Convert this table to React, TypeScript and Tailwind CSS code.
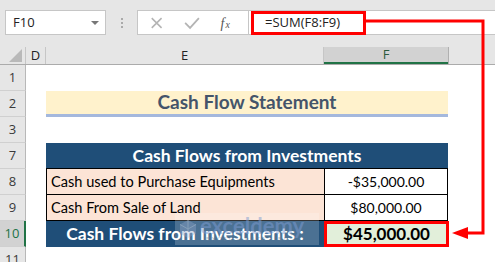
import React from 'react';

const rowHeads = [
  { n: '1' },
  { n: '2' },
  { n: '3' },
  { n: '7' },
  { n: '8' },
  { n: '9' },
  { n: '10', active: true },
  { n: '11' },
];

function RowHead({ n, active }: { n: string; active?: boolean }) {
  return (
    <div
      className={
        'flex h-full w-[26px] shrink-0 items-center justify-center border-b border-[#d0d0d0] text-[13px] ' +
        (active
          ? 'border-r-2 border-r-[#217346] bg-[#d2d2d2] text-[#217346]'
          : 'border-r border-r-[#b8b8b8] bg-[#e6e6e6] text-[#3a3a3a]')
      }
      style={{ fontFamily: '"Open Sans", "DejaVu Sans", sans-serif' }}
    >
      {n}
    </div>
  );
}

export default function App() {
  return (
    <div className="relative h-[262px] w-[495px] overflow-hidden bg-white font-['Lato',sans-serif]">
      {/* Formula bar */}
      <div className="flex h-[47px] items-start bg-[#e6e6e6] pt-[10px]">
        <div className="ml-[5px] flex h-[25px] w-[101px] items-center justify-between border border-[#c6c6c6] bg-white pl-[7px] pr-[6px] font-['Open_Sans',sans-serif] text-[13px] text-[#222]">
          <span>F10</span>
          <span className="h-0 w-0 border-x-[4px] border-t-[4px] border-x-transparent border-t-[#777]" />
        </div>
        <div className="flex h-[25px] w-[31px] flex-col items-center justify-center gap-[2px]">
          <span className="h-[2px] w-[2px] bg-[#aaa]" />
          <span className="h-[2px] w-[2px] bg-[#aaa]" />
          <span className="h-[2px] w-[2px] bg-[#aaa]" />
        </div>
        <div className="flex h-[25px] w-[112px] items-center border border-[#c6c6c6] bg-white">
          <svg width="112" height="23" viewBox="0 0 112 23">
            <path d="M14 7 L24 17 M24 7 L14 17" stroke="#b4b4b4" strokeWidth="1.6" fill="none" />
            <path d="M48 12 L53 17 L62 7" stroke="#b4b4b4" strokeWidth="1.8" fill="none" />
            <text x="84" y="17" fontFamily="'Liberation Serif', serif" fontStyle="italic" fontSize="14" fill="#555">f</text>
            <text x="89" y="17" fontFamily="'Liberation Serif', serif" fontStyle="italic" fontSize="10" fill="#555">x</text>
          </svg>
        </div>
        <div className="flex h-[25px] flex-1 items-center border-y border-[#c6c6c6] bg-white pl-[2px]">
          <div className="flex h-[24px] w-[115px] items-center border-[3px] border-[#ff0000] pl-[11px] font-['Open_Sans',sans-serif] text-[13px] text-[#222]">
            =SUM(F8:F9)
          </div>
        </div>
      </div>

      {/* Column headers */}
      <div
        className="flex h-[18px] border-b border-[#ababab] bg-[#e6e6e6] text-[13px] text-[#222]"
        style={{ fontFamily: '"Open Sans", "DejaVu Sans", sans-serif' }}
      >
        <div className="relative w-[26px] shrink-0 border-r border-[#c6c6c6]">
          <span className="absolute bottom-[2px] right-[3px] h-0 w-0 border-b-[13px] border-l-[13px] border-b-[#b9b9b9] border-l-transparent" />
        </div>
        <div className="flex w-[20px] shrink-0 items-center justify-center border-r border-[#c6c6c6]">D</div>
        <div className="flex w-[278px] shrink-0 items-center justify-center border-r border-[#c6c6c6]">E</div>
        <div className="flex w-[124px] shrink-0 items-center justify-center border-b-2 border-[#217346] bg-[#d2d2d2] text-[#2a5a3c]">
          F
        </div>
        <div className="flex-1 border-l border-[#b0b0b0]" />
      </div>

      {/* Rows */}
      <div className="flex flex-col">
        {rowHeads.map((r) => (
          <div key={r.n} className="flex h-[26px]">
            <RowHead n={r.n} active={r.active} />
            <div className="w-[20px] shrink-0" />
            {r.n === '2' && (
              <div className="flex h-[26px] w-[402px] items-center justify-center border-b-[3px] border-[#a4b8dd] bg-[#fff2cc] text-[19px] font-bold text-[#44546a]">
                Cash Flow Statement
              </div>
            )}
            {r.n === '7' && (
              <div className="flex w-[402px] items-center justify-center border-b border-black bg-[#1f4e78] pt-[1px] text-[17.5px] font-bold text-white">
                Cash Flows from Investments
              </div>
            )}
            {(r.n === '8' || r.n === '9') && (
              <>
                <div className="flex w-[278px] items-center border-b border-l border-black bg-[#fce4d6] pl-[4px] text-[14.6px] text-black">
                  {r.n === '8' ? 'Cash used to Purchase Equipments' : 'Cash From Sale of Land'}
                </div>
                <div className="flex w-[124px] items-center justify-center border-x border-b border-black bg-white text-[14px] text-black">
                  {r.n === '8' ? '-$35,000.00' : '$80,000.00'}
                </div>
              </>
            )}
            {r.n === '10' && (
              <>
                <div className="flex w-[278px] items-center justify-center bg-[#1f4e78] text-[17.5px] font-bold text-white">
                  Cash Flows from Investments :
                </div>
                <div className="flex w-[125px] items-center justify-center border-[3px] border-[#ff0000] bg-[#e2efda] text-[17px] font-bold text-black">
                  $45,000.00
                </div>
              </>
            )}
          </div>
        ))}
      </div>

      {/* Watermark */}
      <div className="absolute left-[175px] top-[213px] flex h-[32px] w-[144px] items-center gap-[3px] bg-white/20 pl-[4px]">
        <svg width="18" height="20" viewBox="0 0 18 20" className="opacity-40">
          <path d="M9 1 L17 5.5 L17 14.5 L9 19 L1 14.5 L1 5.5 Z" fill="#8fa5c8" />
          <path d="M9 1 L9 10 L17 5.5 M9 10 L1 5.5 M9 10 L9 19" stroke="#dbe4f2" strokeWidth="1" fill="none" />
        </svg>
        <div className="flex flex-col leading-none">
          <span className="text-[22px] font-bold leading-[20px] text-[#7d9bd1]/50">exceldemy</span>
          <span className="pl-[6px] text-[6px] tracking-[2px] text-[#6a7c98]/50">EXCEL · DATA · BI</span>
        </div>
      </div>

      {/* Connector line */}
      <svg className="pointer-events-none absolute inset-0" width="495" height="262">
        <path d="M363 21 H483 V233 H465" stroke="#ff0000" strokeWidth="3" fill="none" />
        <path d="M452 233 L468 227 L468 239 Z" fill="#ff0000" />
      </svg>
    </div>
  );
}
